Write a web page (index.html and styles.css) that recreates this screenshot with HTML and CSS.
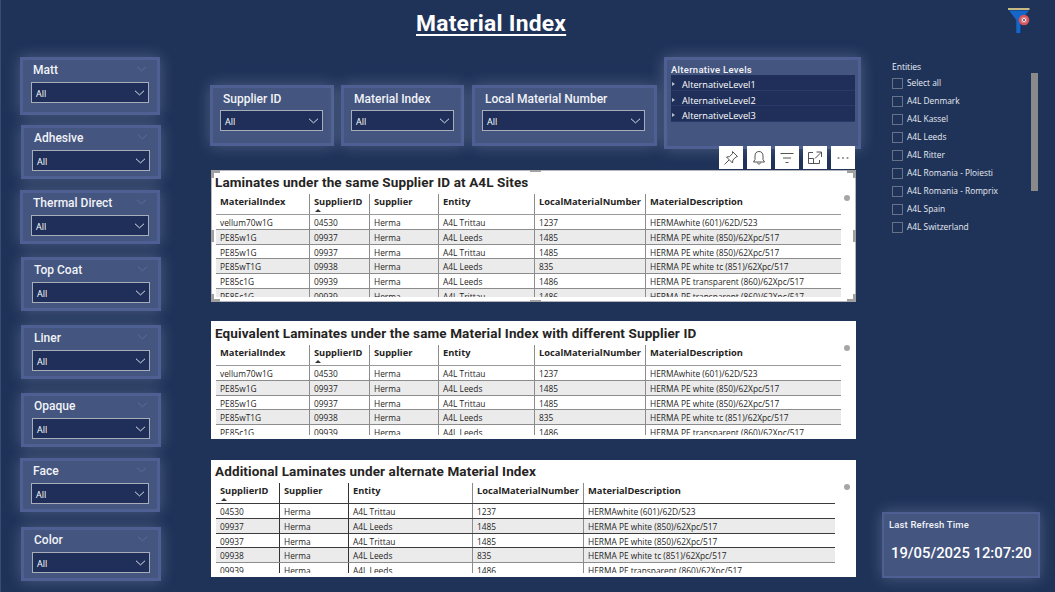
FILE: index.html
```html
<!DOCTYPE html>
<html lang="en">
<head>
<meta charset="utf-8">
<title>Material Index</title>
<link rel="stylesheet" href="styles.css">
</head>
<body>
<svg class="defs" width="0" height="0" aria-hidden="true">
  <symbol id="chev" viewBox="0 0 14 8"><path d="M1 1l6 5.5L13 1" fill="none" stroke="currentColor" stroke-width="1.300"/></symbol>
</svg>
<main class="page">
  <aside class="left">
    <section class="slicer slicer--tall"><h3>Matt</h3><div class="drop"><span>All</span><svg class="chev"><use href="#chev"/></svg></div><svg class="ghost"><use href="#chev"/></svg></section>
    <section class="slicer slicer--nudge"><h3>Adhesive</h3><div class="drop"><span>All</span><svg class="chev"><use href="#chev"/></svg></div><svg class="ghost"><use href="#chev"/></svg></section>
    <section class="slicer"><h3>Thermal Direct</h3><div class="drop"><span>All</span><svg class="chev"><use href="#chev"/></svg></div><svg class="ghost"><use href="#chev"/></svg></section>
    <section class="slicer slicer--nudge"><h3>Top Coat</h3><div class="drop"><span>All</span><svg class="chev"><use href="#chev"/></svg></div><svg class="ghost"><use href="#chev"/></svg></section>
    <section class="slicer slicer--nudge"><h3>Liner</h3><div class="drop"><span>All</span><svg class="chev"><use href="#chev"/></svg></div><svg class="ghost"><use href="#chev"/></svg></section>
    <section class="slicer slicer--nudge"><h3>Opaque</h3><div class="drop"><span>All</span><svg class="chev"><use href="#chev"/></svg></div><svg class="ghost"><use href="#chev"/></svg></section>
    <section class="slicer"><h3>Face</h3><div class="drop"><span>All</span><svg class="chev"><use href="#chev"/></svg></div><svg class="ghost"><use href="#chev"/></svg></section>
    <section class="slicer slicer--nudge"><h3>Color</h3><div class="drop"><span>All</span><svg class="chev"><use href="#chev"/></svg></div><svg class="ghost"><use href="#chev"/></svg></section>
  </aside>

  <div class="center">
    <h1 class="title">Material Index</h1>
    <div class="filters">
      <section class="slicer slicer--supplier"><h3>Supplier ID</h3><div class="drop"><span>All</span><svg class="chev"><use href="#chev"/></svg></div></section>
      <section class="slicer slicer--material"><h3>Material Index</h3><div class="drop"><span>All</span><svg class="chev"><use href="#chev"/></svg></div></section>
      <section class="slicer slicer--local"><h3>Local Material Number</h3><div class="drop"><span>All</span><svg class="chev"><use href="#chev"/></svg></div></section>
      <section class="levels">
        <h4>Alternative Levels</h4>
        <ul>
          <li>AlternativeLevel1</li>
          <li>AlternativeLevel2</li>
          <li>AlternativeLevel3</li>
        </ul>
      </section>
    </div>

    <div class="tools">
      <button class="tool" aria-label="Pin"><svg viewBox="0 0 16 16"><path d="M9.500 1.500l5 5-1.600.5-3 3-.4 3-6-6 3-.4 3-3zM6 10l-4.500 4.500" fill="none" stroke="#555" stroke-width="1"/></svg></button>
      <button class="tool" aria-label="Alert"><svg viewBox="0 0 16 16"><path d="M8 1.500c-2.800 0-4 2-4 4.500v3.500L2.500 12h11L12 9.500V6c0-2.500-1.200-4.500-4-4.500zM6.300 12.500c.2 2 3.200 2 3.400 0" fill="none" stroke="#555" stroke-width="1"/></svg></button>
      <button class="tool" aria-label="Filter"><svg viewBox="0 0 16 16"><path d="M1.500 3.500h13M4 8h8M6.500 12.500h3" fill="none" stroke="#555" stroke-width="1"/></svg></button>
      <button class="tool" aria-label="Focus"><svg viewBox="0 0 16 16"><path d="M6 2.500H1.500v11h11V10M1.500 8.500h5v5M9.500 2h5v5M14.500 2L8 8.500" fill="none" stroke="#555" stroke-width="1"/></svg></button>
      <button class="tool" aria-label="More"><svg viewBox="0 0 16 16"><g fill="#8a8a8a"><circle cx="3.500" cy="8" r="1.100"/><circle cx="8" cy="8" r="1.100"/><circle cx="12.500" cy="8" r="1.100"/></g></svg></button>
    </div>

    <section class="card card--first">
      <i class="hd hd--tl"></i><i class="hd hd--tr"></i><i class="hd hd--bl"></i><i class="hd hd--br"></i>
      <i class="hd hd--t"></i><i class="hd hd--b"></i><i class="hd hd--l"></i><i class="hd hd--r"></i>
      <h2>Laminates under the same Supplier ID at A4L Sites</h2>
      <div class="tbl tbl--six tbl--h1">
        <div class="row row--head"><b>MaterialIndex</b><b class="sorted">SupplierID</b><b>Supplier</b><b>Entity</b><b>LocalMaterialNumber</b><b>MaterialDescription</b></div>
        <div class="row"><span>vellum70w1G</span><span>04530</span><span>Herma</span><span>A4L Trittau</span><span>1237</span><span>HERMAwhite (601)/62D/523</span></div>
        <div class="row row--alt"><span>PE85w1G</span><span>09937</span><span>Herma</span><span>A4L Leeds</span><span>1485</span><span>HERMA PE white (850)/62Xpc/517</span></div>
        <div class="row"><span>PE85w1G</span><span>09937</span><span>Herma</span><span>A4L Trittau</span><span>1485</span><span>HERMA PE white (850)/62Xpc/517</span></div>
        <div class="row row--alt"><span>PE85wT1G</span><span>09938</span><span>Herma</span><span>A4L Leeds</span><span>835</span><span>HERMA PE white tc (851)/62Xpc/517</span></div>
        <div class="row"><span>PE85c1G</span><span>09939</span><span>Herma</span><span>A4L Leeds</span><span>1486</span><span>HERMA PE transparent (860)/62Xpc/517</span></div>
        <div class="row row--alt"><span>PE85c1G</span><span>09939</span><span>Herma</span><span>A4L Trittau</span><span>1486</span><span>HERMA PE transparent (860)/62Xpc/517</span></div>
      </div>
      <i class="dot"></i>
    </section>

    <section class="card card--second">
      <h2>Equivalent Laminates under the same Material Index with different Supplier ID</h2>
      <div class="tbl tbl--six tbl--h2">
        <div class="row row--head"><b>MaterialIndex</b><b class="sorted">SupplierID</b><b>Supplier</b><b>Entity</b><b>LocalMaterialNumber</b><b>MaterialDescription</b></div>
        <div class="row"><span>vellum70w1G</span><span>04530</span><span>Herma</span><span>A4L Trittau</span><span>1237</span><span>HERMAwhite (601)/62D/523</span></div>
        <div class="row row--alt"><span>PE85w1G</span><span>09937</span><span>Herma</span><span>A4L Leeds</span><span>1485</span><span>HERMA PE white (850)/62Xpc/517</span></div>
        <div class="row"><span>PE85w1G</span><span>09937</span><span>Herma</span><span>A4L Trittau</span><span>1485</span><span>HERMA PE white (850)/62Xpc/517</span></div>
        <div class="row row--alt"><span>PE85wT1G</span><span>09938</span><span>Herma</span><span>A4L Leeds</span><span>835</span><span>HERMA PE white tc (851)/62Xpc/517</span></div>
        <div class="row"><span>PE85c1G</span><span>09939</span><span>Herma</span><span>A4L Leeds</span><span>1486</span><span>HERMA PE transparent (860)/62Xpc/517</span></div>
      </div>
      <i class="dot"></i>
    </section>

    <section class="card card--third">
      <h2>Additional Laminates under alternate Material Index</h2>
      <div class="tbl tbl--five tbl--h3">
        <div class="row row--head"><b class="sorted">SupplierID</b><b>Supplier</b><b>Entity</b><b>LocalMaterialNumber</b><b>MaterialDescription</b></div>
        <div class="row"><span>04530</span><span>Herma</span><span>A4L Trittau</span><span>1237</span><span>HERMAwhite (601)/62D/523</span></div>
        <div class="row row--alt"><span>09937</span><span>Herma</span><span>A4L Leeds</span><span>1485</span><span>HERMA PE white (850)/62Xpc/517</span></div>
        <div class="row"><span>09937</span><span>Herma</span><span>A4L Trittau</span><span>1485</span><span>HERMA PE white (850)/62Xpc/517</span></div>
        <div class="row row--alt"><span>09938</span><span>Herma</span><span>A4L Leeds</span><span>835</span><span>HERMA PE white tc (851)/62Xpc/517</span></div>
        <div class="row"><span>09939</span><span>Herma</span><span>A4L Leeds</span><span>1486</span><span>HERMA PE transparent (860)/62Xpc/517</span></div>
      </div>
      <i class="dot"></i>
    </section>
  </div>

  <aside class="right">
    <div class="clear">
      <svg viewBox="0 0 22 25" width="22" height="25" aria-label="Clear filters">
        <path d="M0 1h21.500" stroke="#d8c98c" stroke-width="1.800"/>
        <path d="M1 2.500h20L13 12v13H8.300V12z" fill="#1467c8"/>
        <path d="M13 12v13" stroke="#0b2a63" stroke-width="1"/>
        <circle cx="16" cy="12" r="5.300" fill="#d9535d"/>
        <rect x="13.700" y="9.700" width="4.600" height="4.600" fill="#e6dcdd"/>
        <path d="M14.500 10.500l3 3m0-3l-3 3" stroke="#8a5058" stroke-width=".9"/>
      </svg>
    </div>
    <div class="entities">
      <h4>Entities</h4>
      <ul>
        <li>Select all</li>
        <li>A4L Denmark</li>
        <li>A4L Kassel</li>
        <li>A4L Leeds</li>
        <li>A4L Ritter</li>
        <li>A4L Romania - Ploiesti</li>
        <li>A4L Romania - Romprix</li>
        <li>A4L Spain</li>
        <li>A4L Switzerland</li>
      </ul>
      <i class="scroll"></i>
    </div>
    <section class="refresh">
      <h5>Last Refresh Time</h5>
      <p>19/05/2025 12:07:20</p>
    </section>
  </aside>
</main>
</body>
</html>
```

FILE: styles.css
```css
* { box-sizing: border-box; }
html, body { margin: 0; padding: 0; }
body { width: 1055px; height: 592px; overflow: hidden; background: #1f3359; font-family: "Roboto", "Liberation Sans", sans-serif; color: #fff; }
.defs { position: absolute; }
h1, h2, h3, h4, h5, p, ul { margin: 0; padding: 0; list-style: none; }
i { display: block; }

.page { display: flex; width: 1055px; height: 592px; border-left: 1px solid #3a4a72; position: relative; }

/* left slicers */
.left { width: 209px; flex: none; padding: 57px 0 0 19px; display: grid; grid-template-rows: 68px 65px 67px 68px 68px 65px 69px 53px; }

.slicer { position: relative; width: 140px; height: 54px; background: #44557f; border: 3px solid #4e6093; box-shadow: 0 0 14px rgba(200, 210, 235, .28); padding: 0 8px; }
.slicer--tall { height: 58px; }
.slicer--nudge { margin-left: 1px; }
.slicer h3 { font-size: 12px; font-weight: 500; line-height: 14px; padding: 3px 0 0 2px; color: #f1f3f8; height: 22px; white-space: nowrap; }
.drop { display: flex; align-items: center; justify-content: space-between; width: 118px; height: 21px; background: #1f2f59; border: 1.500px solid #a8adba; padding: 1px 3px 0 4px; font: 9px "Open Sans", sans-serif; color: #fff; }
.chev { width: 11px; height: 6px; color: #dfe4ee; }
.ghost { position: absolute; right: 10px; top: 6px; width: 11px; height: 6px; color: #5d6d95; }

/* center */
.center { width: 656px; flex: none; position: relative; }
.title { height: 57px; padding: 9px 0 0 206px; font-size: 22.800px; line-height: 30px; font-weight: 700; text-decoration: underline; text-decoration-thickness: 2px; text-underline-offset: 3px; letter-spacing: .25px; }
.filters { display: flex; height: 113px; align-items: flex-start; padding-top: 28px; }
.filters .slicer { height: 61px; padding: 0 7px; margin-left: 0; flex: none; }
.filters h3 { padding: 4px 0 0 3px; }
.slicer--supplier { width: 124px; margin-right: 7px; }
.slicer--supplier .drop, .slicer--material .drop { width: 103px; }
.slicer--material { width: 123px; margin-right: 8px; }
.slicer--local { width: 185px; margin-right: 7px; }
.slicer--local .drop { width: 163px; }
.levels { width: 197px; height: 92px; flex: none; margin-top: -28px; background: #44557f; border: 3px solid #4e6093; box-shadow: 0 0 14px rgba(200, 210, 235, .28); padding: 3px 4px 0; }
.levels h4 { font-size: 9.500px; font-weight: 500; line-height: 13px; height: 12px; letter-spacing: .3px; color: #f1f3f8; }
.levels ul { background: #1f2f59; width: 184px; height: 47px; }
.levels li { height: 15.500px; font: 9.200px/19px "Open Sans", sans-serif; padding-left: 11px; position: relative; border-bottom: 1px solid #29396a; overflow: hidden; }
.levels li::before { content: ""; position: absolute; left: 1px; top: 7px; border-left: 3px solid #b9c0d0; border-top: 2.500px solid transparent; border-bottom: 2.500px solid transparent; }

.tools { position: absolute; left: 509px; top: 146px; display: flex; gap: 4px; z-index: 2; }
.tool { width: 24px; height: 23px; border: 0; padding: 4px; background: #fff; display: block; }
.tool svg { display: block; width: 16px; height: 16px; }

/* cards */
.card { position: relative; margin-left: 1px; width: 645px; background: #fff; color: #252423; }
.card h2 { font-size: 13.500px; line-height: 16px; font-weight: 700; padding: 4px 0 0 4px; height: 24px; letter-spacing: .12px; white-space: nowrap; }
.card--first { height: 132px; box-shadow: inset 0 0 0 1px #b4b6ba; }
.card--second { height: 118px; margin-top: 19px; }
.card--third { height: 117px; margin-top: 21px; }
.card--third h2 { padding-top: 3px; height: 23px; }

.tbl { margin-left: 5px; width: 625px; overflow: hidden; font-family: "Open Sans", sans-serif; font-size: 8.350px; }
.tbl--h1 { height: 103px; }
.tbl--h2 { height: 90px; }
.tbl--h3 { height: 90px; width: 619px; }
.row { display: grid; height: 14.750px; border-bottom: 1px solid #8c8c8c; }
.tbl--six .row { grid-template-columns: 94px 60px 69px 96px 111px 195px; }
.tbl--five .row { grid-template-columns: 64px 69px 124px 111px 251px; }
.row--head { height: 21px; border-bottom: 1.500px solid #9a9a9a; }
.row--alt { background: #ebebeb; }
.row > * { border-right: 1px solid #8c8c8c; padding: 1px 0 0 4px; line-height: 14px; white-space: nowrap; overflow: hidden; font-weight: 400; }
.row > *:last-child { border-right: 0; }
.row b { font-size: 9.300px; font-weight: 700; padding-top: 0; line-height: 15px; position: relative; }
.sorted::after { content: ""; position: absolute; left: 5px; top: 15px; border-bottom: 3px solid #333; border-left: 3px solid transparent; border-right: 3px solid transparent; }
.tbl--five .row > *:nth-child(-n+2) { border-right-color: #333; }
.tbl--five .row:nth-child(-n+4) { border-bottom-color: #3c3c3c; }
.dot { position: absolute; right: 6px; top: 24px; width: 6px; height: 6px; border-radius: 50%; background: #a6a6a6; }
.card--first .dot { top: 25px; }

.hd { position: absolute; background: #a0a0a0; }
.hd--tl, .hd--tr, .hd--bl, .hd--br { width: 9px; height: 8px; background: none; border: 0 solid #a0a0a0; }
.hd--tl { left: 0; top: 0; border-width: 3px 0 0 3px; }
.hd--tr { right: 0; top: 0; border-width: 3px 3px 0 0; }
.hd--bl { left: 0; bottom: 0; border-width: 0 0 3px 3px; }
.hd--br { right: 0; bottom: 0; border-width: 0 3px 3px 0; }
.hd--t, .hd--b { left: 319px; width: 11px; height: 2px; }
.hd--t { top: 0; }
.hd--b { bottom: 0; }
.hd--l, .hd--r { top: 60px; width: 3px; height: 12px; }
.hd--l { left: 0; }
.hd--r { right: 0; }

/* right */
.right { flex: 1; position: relative; padding-left: 26px; }
.clear { height: 60px; padding: 8px 0 0 116px; }
.clear svg { display: block; }
.entities { position: relative; font: 8.350px "Open Sans", sans-serif; color: #fff; height: 452px; }
.entities h4 { font-size: 8.500px; font-weight: 400; height: 14px; line-height: 14px; color: #eef1f6; }
.entities li { height: 18px; line-height: 18px; padding-left: 15px; position: relative; color: #e8ebf2; }
.entities li::before { content: ""; position: absolute; left: 0; top: 4px; width: 9px; height: 9px; border: 1px solid #67728a; }
.scroll { position: absolute; left: 139px; top: 13px; width: 7px; height: 118px; background: #8a8a8a; }
.refresh { position: absolute; left: 16px; top: 512px; width: 158px; height: 66px; background: #44557f; border: 2px solid #4e6093; box-shadow: 0 0 14px rgba(200, 210, 235, .28); padding: 5px 5px 0; }
.refresh h5 { font-size: 9.500px; font-weight: 500; line-height: 12px; letter-spacing: .15px; color: #f1f3f8; }
.refresh p { margin: 13px 0 0 2px; font-size: 14.800px; line-height: 18px; font-weight: 500; white-space: nowrap; }
```
